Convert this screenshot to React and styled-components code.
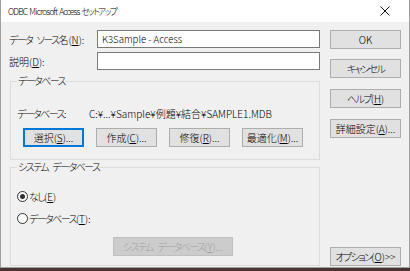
import React from 'react'
import styled, { createGlobalStyle } from 'styled-components'

const GlobalStyle = createGlobalStyle`
  html, body {
    margin: 0;
    padding: 0;
    background: #4a3431;
  }
  body {
    font-family: "Noto Sans CJK JP", "Noto Sans", sans-serif;
    font-size: 10px;
    font-weight: 300;
    font-feature-settings: "palt";
    color: #000;
  }
  u {
    text-decoration-thickness: 1px;
    text-underline-offset: 1px;
  }
`

// kana runs in the reference font are much narrower than Noto's
const K = styled.span`
  letter-spacing: -1.6px;
`

const Window = styled.div`
  width: 410px;
  height: 268px;
  box-sizing: border-box;
  background: #f0f0f0;
  border: 1px solid #a0a0a0;
  border-top: none;
  display: flex;
  flex-direction: column;
`

const TitleBar = styled.div`
  height: 22px;
  background: #fff;
  display: flex;
  align-items: center;
  justify-content: space-between;
  padding: 0 19px 0 7px;
  font-size: 8.6px;
  letter-spacing: -0.9px;
  word-spacing: 1px;
  flex-shrink: 0;
`

const Body = styled.div`
  flex: 1;
  display: flex;
  padding: 8px 0 1px 8px;
`

const LeftCol = styled.div`
  width: 311px;
  display: flex;
  flex-direction: column;
`

const RightCol = styled.div`
  margin-left: 10px;
  width: 71px;
  display: flex;
  flex-direction: column;
  gap: 10px;
`

const FieldRow = styled.div`
  display: flex;
  align-items: center;
  height: 18px;
  margin-bottom: ${p => p.$gap || 0}px;
`

const Label = styled.span`
  width: ${p => p.$w}px;
  flex-shrink: 0;
  white-space: pre;
`

const Input = styled.div`
  flex: 1;
  height: 18px;
  box-sizing: border-box;
  background: #fff;
  border: 1px solid #7a7a7a;
  padding: 0 4px;
  display: flex;
  align-items: center;
  font-size: 9.6px;
`

const Group = styled.div`
  margin: ${p => p.$top}px 0 0 1px;
  width: 310px;
  height: ${p => p.$h}px;
  box-sizing: border-box;
  border: 1px solid #dcdcdc;
  padding: 0 0 0 6px;
  display: flex;
  flex-direction: column;
`

const GroupTitle = styled.div`
  align-self: flex-start;
  margin: -8px 0 0 0;
  padding: 0 1px;
  line-height: 14px;
  background: #f0f0f0;
  white-space: pre;
`

const InfoRow = styled.div`
  display: flex;
  line-height: 14px;
  margin-top: 19px;
  white-space: nowrap;
`

const ButtonRow = styled.div`
  display: flex;
  gap: 12px;
  margin: 7px 0 0 6px;
`

const ButtonBox = styled.div`
  width: ${p => p.$w || 71}px;
  height: 19px;
  box-sizing: border-box;
  flex-shrink: 0;
  background: ${p => (p.$disabled ? '#cccccc' : '#e1e1e1')};
  color: ${p => (p.$disabled ? '#a0a0a0' : '#000')};
  border: 1px solid ${p => (p.$focus ? '#0078d7' : p.$disabled ? '#bfbfbf' : '#adadad')};
  box-shadow: ${p => (p.$focus ? 'inset 0 0 0 1px #0078d7' : 'none')};
  display: flex;
  align-items: center;
  justify-content: center;
  white-space: pre;
  margin-top: ${p => p.$mt || 0};
  margin-left: ${p => p.$ml || 0}px;
  align-self: ${p => p.$align || 'auto'};
`

const Button = ({ children, ...rest }) => (
  <ButtonBox {...rest}>
    <span>{children}</span>
  </ButtonBox>
)

const RadioRow = styled.div`
  display: flex;
  align-items: center;
  gap: 1px;
  height: 14px;
  margin-top: ${p => p.$mt}px;
`

const RadioCircle = styled.span`
  width: 11px;
  height: 11px;
  box-sizing: border-box;
  border-radius: 50%;
  border: 1px solid #333;
  background: #fff;
  display: flex;
  align-items: center;
  justify-content: center;
  &::after {
    content: '';
    width: 5px;
    height: 5px;
    border-radius: 50%;
    background: ${p => (p.$checked ? '#333' : 'transparent')};
  }
`

const CloseIcon = () => (
  <svg width="10" height="10" viewBox="0 0 10 10">
    <path d="M0.5 0.5 L9.5 9.5 M9.5 0.5 L0.5 9.5" stroke="#111" strokeWidth="1" />
  </svg>
)

export default function App() {
  return (
    <>
      <GlobalStyle />
      <Window>
        <TitleBar>
          <span>ODBC Microsoft Access <K>セットアップ</K></span>
          <CloseIcon />
        </TitleBar>
        <Body>
          <LeftCol>
            <FieldRow $gap={4}>
              <Label $w={88}><K>データ</K>  <K>ソース</K>名(<u>N</u>):</Label>
              <Input>K3Sample - Access</Input>
            </FieldRow>
            <FieldRow>
              <Label $w={88}>説明(<u>D</u>):</Label>
              <Input />
            </FieldRow>

            <Group $top={11} $h={79}>
              <GroupTitle><K>データベース</K></GroupTitle>
              <InfoRow>
                <Label $w={72}><K>データベース</K>:</Label>
                <span>C:¥...¥Sample¥例題¥結合¥SAMPLE1.MDB</span>
              </InfoRow>
              <ButtonRow>
                <Button $w={61} $focus>選択(<u>S</u>)...</Button>
                <Button $w={61}>作成(<u>C</u>)...</Button>
                <Button $w={61}>修復(<u>R</u>)...</Button>
                <Button $w={61}>最適化(<u>M</u>)...</Button>
              </ButtonRow>
            </Group>

            <Group $top={7} $h={99}>
              <GroupTitle><K>システム</K>  <K>データベース</K></GroupTitle>
              <RadioRow $mt={15}>
                <RadioCircle $checked />
                <span><K>なし</K>(<u>E</u>)</span>
              </RadioRow>
              <RadioRow $mt={8}>
                <RadioCircle />
                <span><K>データベース</K>(<u>T</u>):</span>
              </RadioRow>
              <Button $w={120} $disabled $mt="12px" $ml={96} $align="flex-start">
                <K>システム</K>  <K>データベース</K>(<u>Y</u>)...
              </Button>
            </Group>
          </LeftCol>

          <RightCol>
            <Button>OK</Button>
            <Button><K>キャンセル</K></Button>
            <Button $mt="1px"><K>ヘルプ</K>(<u>H</u>)</Button>
            <Button $mt="1px">詳細設定(<u>A</u>)...</Button>
            <Button $mt="auto"><K>オプション</K>(<u>O</u>)&gt;&gt;</Button>
          </RightCol>
        </Body>
      </Window>
    </>
  )
}
